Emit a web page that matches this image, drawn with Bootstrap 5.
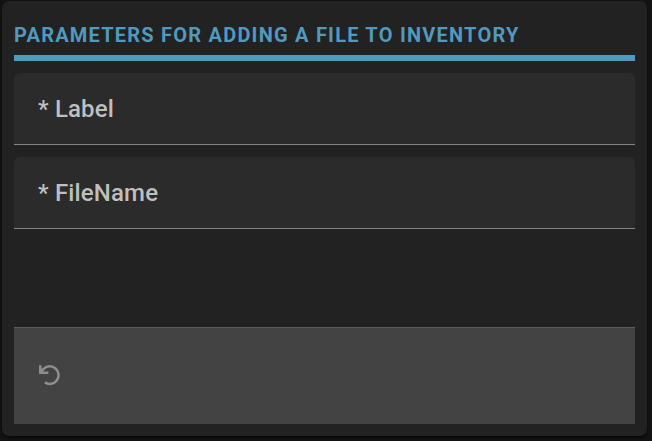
<!DOCTYPE html>
<html lang="en">
<head>
<meta charset="utf-8">
<title>Inventory parameters</title>
<link href="https://cdn.jsdelivr.net/npm/bootstrap@5.3.0/dist/css/bootstrap.min.css" rel="stylesheet">
<style>
body { background: #131313; font-family: Roboto, sans-serif; padding: 1px 5px 5px 2px; height: 441px; overflow: hidden; }
.panel { background: #222; height: 435px; border-radius: 7px; padding: 0 12px 12px; box-shadow: 0 2px 3px rgba(0,0,0,.55); }
.panel-title { height: 60px; padding-top: 21px; border-bottom: 6px solid #5199bf; color: #5199bf; font-size: 20px; line-height: 26px; font-weight: 700; letter-spacing: 1.22px; white-space: nowrap; }
.field { height: 72px; margin-top: 12px; padding: 0 24px; background: #2b2b2b; border-bottom: 1px solid #858585; border-radius: 6px 6px 0 0; color: #bfbfbf; font-size: 24px; line-height: 36px; font-weight: 500; letter-spacing: .15px; }
.actions { height: 97px; background: #434343; border-top: 1px solid #5c5c5c; padding: 0 24px 2px; }
.icon-btn { color: #8e8e8e; line-height: 0; }
</style>
</head>
<body>
<main class="panel d-flex flex-column">
  <h1 class="panel-title text-uppercase mb-0">Parameters for adding a file to inventory</h1>
  <label class="field d-flex align-items-center">* Label</label>
  <label class="field d-flex align-items-center">* FileName</label>
  <div class="actions d-flex align-items-center mt-auto">
    <button class="icon-btn btn p-0 border-0" type="button" aria-label="Reset">
      <svg width="24" height="24" viewBox="0 0 24 24" fill="none" stroke="currentColor" stroke-width="2.5">
        <path d="M2.3 2.2V9.8H10.4M3 9.1L5.6 5.8A8.8 8.8 0 1 1 6.9 19.4"/>
      </svg>
    </button>
  </div>
</main>
<script src="https://cdn.jsdelivr.net/npm/bootstrap@5.3.0/dist/js/bootstrap.bundle.min.js"></script>
</body>
</html>
